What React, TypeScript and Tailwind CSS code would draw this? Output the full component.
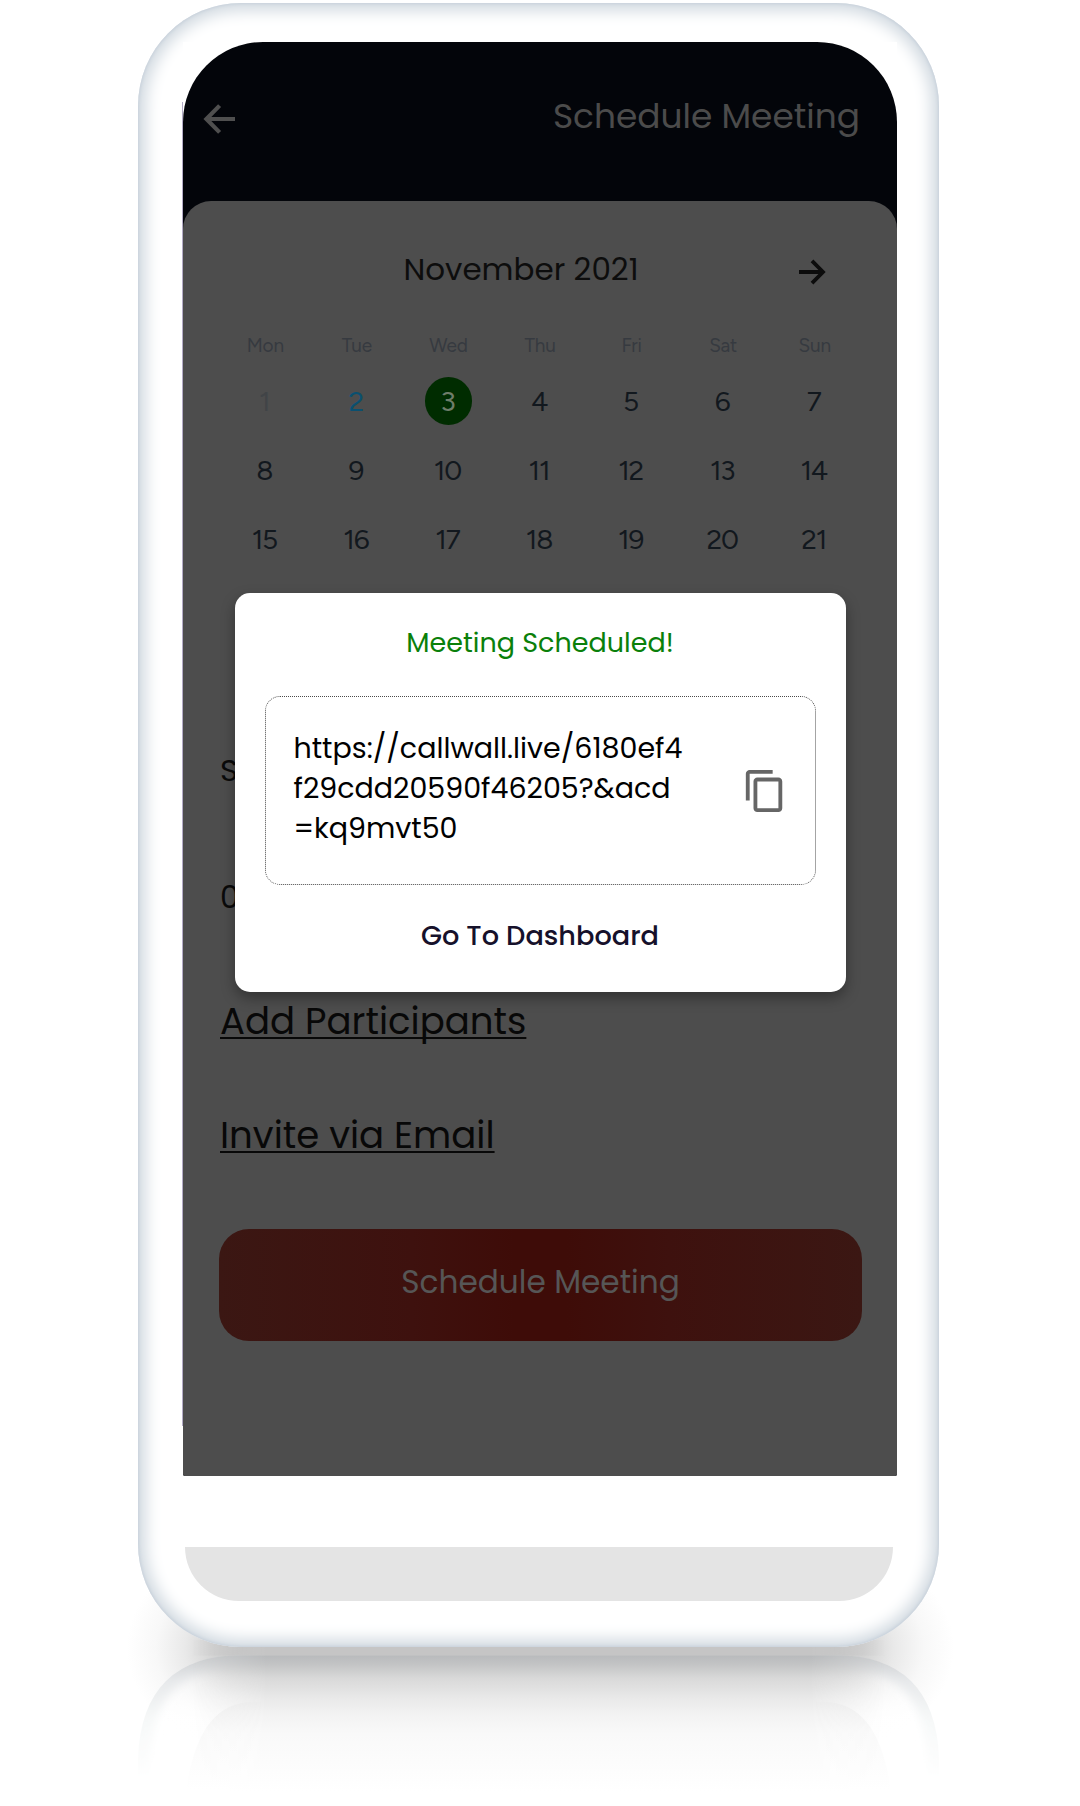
import { MdContentCopy } from "react-icons/md";

const WEEKDAYS = ["Mon", "Tue", "Wed", "Thu", "Fri", "Sat", "Sun"];
const DAYS = Array.from({ length: 21 }, (_, i) => i + 1);

function dayClass(day: number) {
  if (day === 1) return "text-[#414447]";
  if (day === 2) return "text-[#0a5070]";
  if (day === 3) return "text-[#6f7d6a]";
  return "text-[#12181e]";
}

function PhoneReflection() {
  return (
    <svg className="absolute left-0 top-[1500px]" width="1080" height="306" viewBox="0 1500 1080 306" aria-hidden="true">
      <defs>
        <linearGradient id="floor" gradientUnits="userSpaceOnUse" x1="0" y1="1646" x2="0" y2="1800">
          <stop offset="0" stopColor="#c6c6c6" />
          <stop offset="0.04" stopColor="#c4c5c5" />
          <stop offset="0.065" stopColor="#b9bbbd" />
          <stop offset="0.12" stopColor="#c3c4c5" />
          <stop offset="0.21" stopColor="#d9d9d9" />
          <stop offset="0.34" stopColor="#e9e9e9" />
          <stop offset="0.45" stopColor="#f3f3f3" />
          <stop offset="0.57" stopColor="#f9f9f9" />
          <stop offset="0.75" stopColor="#fcfcfc" />
          <stop offset="0.95" stopColor="#ffffff" />
        </linearGradient>
        <linearGradient id="fadeSides" x1="0" y1="0" x2="1" y2="0">
          <stop offset="0.03" stopColor="#000" />
          <stop offset="0.13" stopColor="#fff" />
          <stop offset="0.87" stopColor="#fff" />
          <stop offset="0.97" stopColor="#000" />
        </linearGradient>
        <mask id="sides" maskUnits="userSpaceOnUse" x="170" y="1640" width="737" height="166">
          <rect x="170" y="1640" width="737" height="166" fill="url(#fadeSides)" />
        </mask>
        <radialGradient id="glow">
          <stop offset="0" stopColor="#c6c6c6" />
          <stop offset="0.25" stopColor="#d2d2d2" />
          <stop offset="0.5" stopColor="#e9e9e9" />
          <stop offset="0.75" stopColor="#f8f8f8" />
          <stop offset="1" stopColor="#ffffff" />
        </radialGradient>
        <linearGradient id="mirrorFill" gradientUnits="userSpaceOnUse" x1="0" y1="1655" x2="0" y2="1720">
          <stop offset="0" stopColor="#ffffff" stopOpacity="0.1" />
          <stop offset="1" stopColor="#ffffff" stopOpacity="0.95" />
        </linearGradient>
        <linearGradient id="rim" gradientUnits="userSpaceOnUse" x1="0" y1="1655" x2="0" y2="1780">
          <stop offset="0" stopColor="#cbcdcf" />
          <stop offset="0.2" stopColor="#e7e9eb" />
          <stop offset="0.5" stopColor="#f6f8f8" />
          <stop offset="1" stopColor="#ffffff" />
        </linearGradient>
        <linearGradient id="glass" gradientUnits="userSpaceOnUse" x1="0" y1="1700" x2="0" y2="1790">
          <stop offset="0" stopColor="#efefef" />
          <stop offset="0.35" stopColor="#fafafa" />
          <stop offset="1" stopColor="#ffffff" />
        </linearGradient>
        <filter id="soft" x="-10%" y="-20%" width="120%" height="140%">
          <feGaussianBlur stdDeviation="4" />
        </filter>
        <clipPath id="mirror">
          <path d="M138 1806V1758Q142 1655 243 1655H834Q935 1655 939 1758V1806Z" />
        </clipPath>
      </defs>
      <ellipse cx="243" cy="1648" rx="116" ry="100" fill="url(#glow)" />
      <ellipse cx="834" cy="1648" rx="120" ry="100" fill="url(#glow)" />
      <g clipPath="url(#mirror)">
        <rect x="138" y="1655" width="801" height="151" fill="url(#mirrorFill)" />
        <path d="M138 1806V1758Q142 1655 243 1655H834Q935 1655 939 1758V1806" fill="none" stroke="url(#rim)" strokeWidth="24" filter="url(#soft)" />
        <path d="M187 1806V1785Q200 1702 253 1702H824Q877 1702 890 1785V1806Z" fill="url(#glass)" />
      </g>
      <g mask="url(#sides)">
        <rect x="170" y="1655" width="737" height="151" fill="url(#floor)" clipPath="url(#mirror)" />
        <rect x="170" y="1640" width="737" height="15.5" fill="#c5c5c5" />
      </g>
    </svg>
  );
}

function MeetingDialog() {
  return (
    <section className="absolute left-[51.5px] top-[551px] flex h-[399px] w-[611px] flex-col rounded-[15px] bg-white px-[30px] shadow-[0_6px_14px_rgba(0,0,0,0.34)]">
      <h2 className="mt-[30px] h-10 text-center text-[27px] leading-10 text-[#0a800a]">Meeting Scheduled!</h2>
      <div className="mt-[33px] flex h-[189px] items-center justify-between rounded-[15px] border border-dotted border-[#4a4a4a] pr-[27px] pl-[28px]">
        <p className="pb-[5px] text-[28.5px] leading-10 whitespace-nowrap text-black">
          https://callwall.live/6180ef4
          <br />
          f29cdd20590f46205?&amp;acd
          <br />
          =kq9mvt50
        </p>
        <button aria-label="Copy link">
          <MdContentCopy className="size-[46px] text-[#666666]" />
        </button>
      </div>
      <button className="mt-[31px] h-10 text-center text-[27.2px] leading-10 font-medium text-[#16112b]">Go To Dashboard</button>
    </section>
  );
}

export default function App() {
  return (
    <main className="relative h-[1806px] w-[1080px] overflow-hidden bg-white font-['Poppins','Inter',sans-serif]">
      <PhoneReflection />
      <div className="relative ml-[138px] pt-[3px]">
        <div className="h-[1644px] w-[801px] rounded-[103px] bg-white pt-[39px] pl-[45px] shadow-[inset_0_0_3px_1px_#c8d1db,inset_0_0_15px_8px_#d2dae1]">
          <div className="relative h-[1505px] w-[714px] bg-white">
            <div className="absolute top-[60px] -left-px h-[1324px] w-px bg-[#b3abc6]" />
            <div className="relative h-[1433.5px] overflow-hidden rounded-t-[80px] rounded-b-[2px] bg-[#03050a]">
              <header className="flex h-[159px] items-start justify-between pr-[37px] pl-[20px]">
                <svg className="mt-[61px]" width="34" height="32" viewBox="0 0 34 32" fill="none" stroke="#4f4f4f" strokeWidth="4.2" aria-label="Back">
                  <path d="M32 16H4M16.6 2.6L3.4 16L16.6 29.4" />
                </svg>
                <h1 className="mt-[50px] text-[34.4px] leading-[48px] text-[#4b4b4b]">Schedule Meeting</h1>
              </header>
              <div className="h-[1275px] rounded-t-[28px] bg-[#4d4d4d]">
                <div className="grid h-[94px] grid-cols-[1fr_auto_1fr] items-end pr-[71px]">
                  <span />
                  <h2 className="pl-[33px] text-[31px] leading-[52px] text-[#0d0d0d]">November 2021</h2>
                  <svg className="mb-[9px] justify-self-end" width="28" height="28" viewBox="0 0 28 28" fill="none" stroke="#0c0c0c" strokeWidth="3.8" aria-label="Next month">
                    <path d="M1 14H25M14 2.8L25 14L14 25.2" />
                  </svg>
                </div>
                <div className="ml-[36.5px] grid w-[641px] grid-cols-7 pt-[39px] text-center font-['Figtree','Inter',sans-serif]">
                  {WEEKDAYS.map((d) => (
                    <span key={d} className="text-[19px] leading-[24px] tracking-[-0.2px] text-[#363a40]">{d}</span>
                  ))}
                </div>
                <div className="mt-[19px] ml-[37px] grid w-[641px] grid-cols-7 gap-y-[21px] font-['Figtree','Inter',sans-serif]">
                  {DAYS.map((d) => (
                    <div key={d} className="flex justify-center">
                      <div className={d === 3 ? "h-12 w-[47px] rounded-full bg-[#002c00]" : "h-12 w-[47px]"}>
                        <span className={`block pr-[3px] text-center text-[28px] leading-[49px] tracking-[-1.2px] ${dayClass(d)}`}>{d}</span>
                      </div>
                    </div>
                  ))}
                </div>
                <div className="mt-[183px] flex flex-col px-[37px] text-[31px] leading-12 text-[#0a0a0a]">
                  <span>S</span>
                  <span className="mt-[79px]">0</span>
                </div>
                <div className="mt-[76px] flex flex-col items-start px-[37px] text-[37.1px] leading-12 text-[#080808]">
                  <a className="underline decoration-2 underline-offset-[3px] [text-decoration-skip-ink:none]">Add Participants</a>
                  <a className="mt-[66px] underline decoration-2 underline-offset-[3px] [text-decoration-skip-ink:none]">Invite via Email</a>
                </div>
                <button className="mt-[70px] ml-[36px] flex h-[112px] w-[643px] items-center justify-center rounded-[30px] bg-[linear-gradient(90deg,#3b1713,#3e110e_30%,#3e0c08_46%,#3e0c08_54%,#3e110e_70%,#3b1713)] pb-[5px] text-[31.2px] text-[#565656]">
                  Schedule Meeting
                </button>
              </div>
            </div>
            <MeetingDialog />
          </div>
          <div className="mr-[46px] ml-[2px] h-[54px] rounded-b-[62px] bg-[#e4e4e4]" />
        </div>
      </div>
    </main>
  );
}
